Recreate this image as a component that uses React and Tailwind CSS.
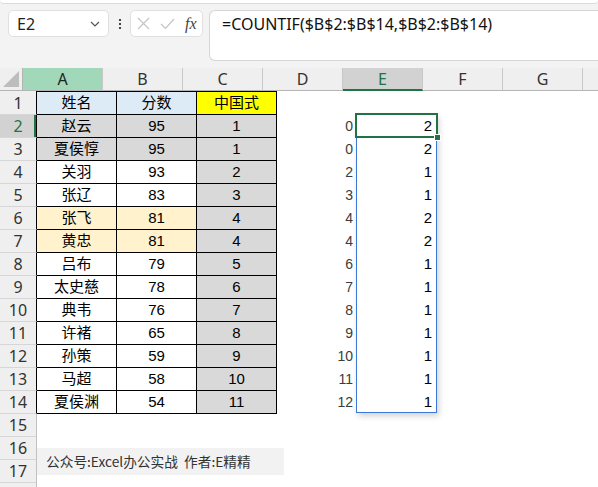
import React from 'react';

const rows = [
    ['赵云', 95, 1, 0, 2],
    ['夏侯惇', 95, 1, 0, 2],
    ['关羽', 93, 2, 2, 1],
    ['张辽', 83, 3, 3, 1],
    ['张飞', 81, 4, 4, 2],
    ['黄忠', 81, 4, 4, 2],
    ['吕布', 79, 5, 6, 1],
    ['太史慈', 78, 6, 7, 1],
    ['典韦', 76, 7, 8, 1],
    ['许褚', 65, 8, 9, 1],
    ['孙策', 59, 9, 10, 1],
    ['马超', 58, 10, 11, 1],
    ['夏侯渊', 54, 11, 12, 1],
];

const cellFont = { fontFamily: '"Liberation Sans", "Noto Sans CJK SC", sans-serif' };
const uiFont = { fontFamily: '"Noto Sans", "Liberation Sans", sans-serif' };

const Toolbar = () => (
    <div className="h-[68px]">
        <div className="h-[4px] bg-white border-b border-[#dadada] rounded-b-[4px]" />
        <div className="flex items-start pl-[8px] pt-[6px]">
            {/* name box */}
            <div className="w-[101px] h-[27px] bg-white border border-[#e0e0e0] rounded-[5px] flex items-center justify-between pl-[8px] pr-[8px]">
                <span className="text-[16px] text-[#222]" style={uiFont}>E2</span>
                <svg width="10" height="6" viewBox="0 0 10 6">
                    <path d="M1 1 L5 5 L9 1" fill="none" stroke="#555" strokeWidth="1.2" />
                </svg>
            </div>
            <div className="w-[21px] h-[27px] flex flex-col items-center justify-center gap-[2px]">
                <span className="w-[2px] h-[2px] bg-[#444]" />
                <span className="w-[2px] h-[2px] bg-[#444]" />
                <span className="w-[2px] h-[2px] bg-[#444]" />
            </div>
            {/* cancel / enter / fx */}
            <div className="w-[73px] h-[27px] bg-white border border-[#e0e0e0] rounded-[5px] flex items-center pl-[6px] gap-[10px]">
                <svg width="13" height="13" viewBox="0 0 13 13">
                    <path d="M1 1 L12 12 M12 1 L1 12" stroke="#c4c4c4" strokeWidth="1.2" />
                </svg>
                <svg width="15" height="12" viewBox="0 0 15 12">
                    <path d="M1 6 L5.5 10.5 L14 1" fill="none" stroke="#c4c4c4" strokeWidth="1.2" />
                </svg>
                <span className="text-[16px] italic text-[#444] leading-none" style={{ fontFamily: '"Liberation Serif", serif' }}>fx</span>
            </div>
            {/* formula */}
            <div className="ml-[6px] flex-1 h-[51px] bg-white border border-r-0 border-[#d6d6d6] rounded-l-[6px] pl-[12px] pt-[1px]">
                <span className="text-[16px] leading-[22px] text-[#111]" style={uiFont}>=COUNTIF($B$2:$B$14,$B$2:$B$14)</span>
            </div>
        </div>
    </div>
);

const ColHeader = () => (
    <div className="flex h-[23px]">
        <div className="w-[37px] h-full bg-[#efefef] border-r border-b border-[#b4b4b4] flex items-end justify-end p-[3px]">
            <svg width="16" height="16" viewBox="0 0 16 16">
                <polygon points="16,0 16,16 0,16" fill="#bdbdbd" />
            </svg>
        </div>
        {['A', 'B', 'C', 'D', 'E', 'F', 'G', ''].map((c, i) => {
            let cls = 'bg-[#efefef] border-b border-[#b4b4b4] text-[#333]';
            if (c === 'A') cls = 'bg-[#a0d8b9] border-b border-[#b4b4b4] text-[#222]';
            if (c === 'E') cls = 'bg-[#d2d2d2] border-b-2 border-b-[#217346] text-[#217346]';
            return (
                <div
                    key={i}
                    className={`w-[80px] shrink-0 h-full border-r border-r-[#c8c8c8] flex items-center justify-center text-[16px] ${cls}`}
                    style={uiFont}
                >
                    {c}
                </div>
            );
        })}
    </div>
);

const RowHead = ({ n, tall, table, active }) => (
    <div
        className={`w-[37px] shrink-0 ${tall ? 'h-[24px]' : 'h-[23px]'} border-r border-b border-b-[#d6d6d6] flex items-center justify-center text-[16px] ${table ? 'border-r-black' : 'border-r-[#c0c0c0]'} ${active ? 'bg-[#d2d2d2] text-[#217346] shadow-[inset_-2px_0_0_#217346]' : 'bg-[#efefef] text-[#333]'}`}
        style={uiFont}
    >
        {n}
    </div>
);

const Sheet = () => (
    <div className="bg-white">
        <ColHeader />
        {/* row 1 */}
        <div className="flex h-[24px]" style={cellFont}>
            <RowHead n={1} tall table />
            <div className="w-[80px] shrink-0 bg-[#ddebf7] border-t border-r border-b border-black flex items-center justify-center text-[15px]">姓名</div>
            <div className="w-[80px] shrink-0 bg-[#ddebf7] border-t border-r border-b border-black flex items-center justify-center text-[15px]">分数</div>
            <div className="w-[80px] shrink-0 bg-[#ffff00] border-t border-r border-b border-black flex items-center justify-center text-[15px]">中国式</div>
        </div>
        {rows.map(([name, score, rank, d, e], i) => {
            const r = i + 2;
            let ab = 'bg-white';
            if (r === 2 || r === 3) ab = 'bg-[#d9d9d9]';
            if (r === 6 || r === 7) ab = 'bg-[#fff2cc]';
            return (
                <div key={r} className="flex h-[23px]" style={cellFont}>
                    <RowHead n={r} table active={r === 2} />
                    <div className={`w-[80px] shrink-0 ${ab} border-r border-b border-black flex items-center justify-center text-[15px]`}>{name}</div>
                    <div className={`w-[80px] shrink-0 ${ab} border-r border-b border-black flex items-center justify-center text-[15px]`}>{score}</div>
                    <div className="w-[80px] shrink-0 bg-[#d9d9d9] border-r border-b border-black flex items-center justify-center text-[15px]">{rank}</div>
                    <div className="w-[80px] shrink-0 flex items-center justify-end pr-[4px] text-[14px] text-[#3c3c3c]">{d}</div>
                    <div className="w-[80px] shrink-0 flex items-center justify-end pr-[5px] text-[15px] text-black">{e}</div>
                </div>
            );
        })}
        {[15, 16, 17, ''].map((r, i) => (
            <div key={i} className="flex h-[23px]">
                <RowHead n={r} />
            </div>
        ))}
    </div>
);

export default function App() {
    return (
        <div className="w-[598px] h-[487px] overflow-hidden bg-[#f3f3f3] relative">
            <Toolbar />
            <Sheet />

            {/* E2:E14 reference range */}
            <div className="absolute left-[356px] top-[114px] w-[81px] h-[299px] border border-[#3c78d8] shadow-[2px_3px_6px_rgba(0,0,0,0.18)] pointer-events-none" />
            {/* active cell */}
            <div className="absolute left-[355px] top-[113px] w-[83px] h-[25px] border-2 border-[#217346] pointer-events-none" />
            <div className="absolute left-[434px] top-[134px] w-[7px] h-[7px] bg-[#217346] border border-white" />

            {/* text box */}
            <div className="absolute left-[37px] top-[448px] w-[247px] h-[27px] bg-[#f2f2f2] flex items-center pl-[9px]">
                <span className="text-[13.7px] text-[#333]" style={{ fontFamily: '"Noto Sans CJK SC", sans-serif' }}>公众号:Excel办公实战&nbsp; 作者:E精精</span>
            </div>
        </div>
    );
}
